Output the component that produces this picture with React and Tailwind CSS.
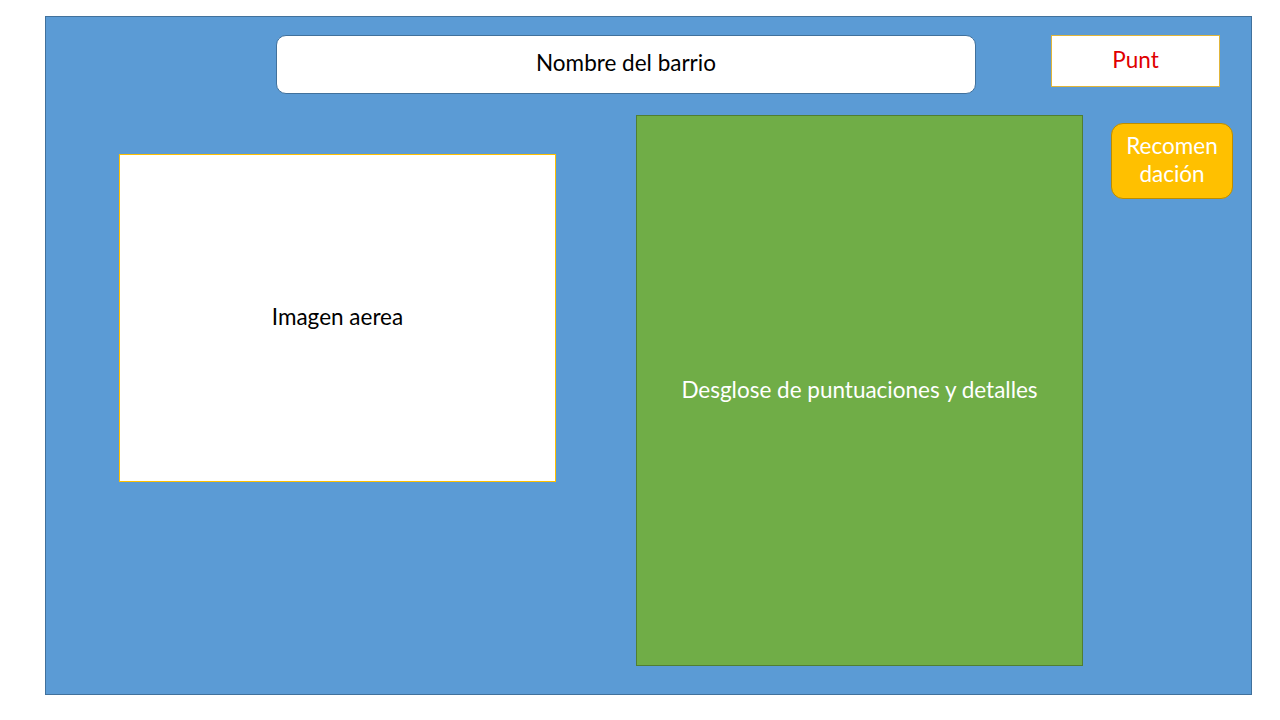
import React from "react";

export default function App() {
    return (
        <div className="w-[1280px] h-[720px] bg-white pt-[16px] pl-[45px] font-['Lato','Open_Sans',sans-serif] text-[22.5px] leading-[28px]">
            <div className="w-[1207px] h-[679px] bg-[#5b9bd5] border border-[#41719c] flex flex-col">
                {/* top row */}
                <div className="flex items-start mt-[18px]">
                    <div className="ml-[230px] w-[700px] h-[59px] rounded-[10px] bg-white border border-[#41719c] flex items-center justify-center text-black pb-[3px]">
                        Nombre del barrio
                    </div>
                    <div className="ml-[75px] w-[169px] h-[52px] bg-white border-solid border-[1.5px] border-[#e0b53a] flex items-center justify-center text-[#e00000] pb-[2px]">
                        Punt
                    </div>
                </div>

                {/* main row */}
                <div className="flex items-start mt-[21px]">
                    <div className="ml-[73px] mt-[39px] w-[437px] h-[328px] bg-white border-solid border-[1.5px] border-[#ffc000] flex items-center justify-center text-black pb-[2px]">
                        Imagen aerea
                    </div>
                    <div className="ml-[80px] w-[447px] h-[551px] bg-[#70ad47] border border-[#507e32] flex items-center justify-center text-white pb-[2px]">
                        Desglose de puntuaciones y detalles
                    </div>
                    <div className="ml-[28px] mt-[8px] w-[122px] h-[76px] rounded-[12px] bg-[#ffc000] border border-[#bc8c00] flex flex-col items-center justify-center text-white pb-[2px]">
                        <span>Recomen</span>
                        <span>dación</span>
                    </div>
                </div>
            </div>
        </div>
    );
}
